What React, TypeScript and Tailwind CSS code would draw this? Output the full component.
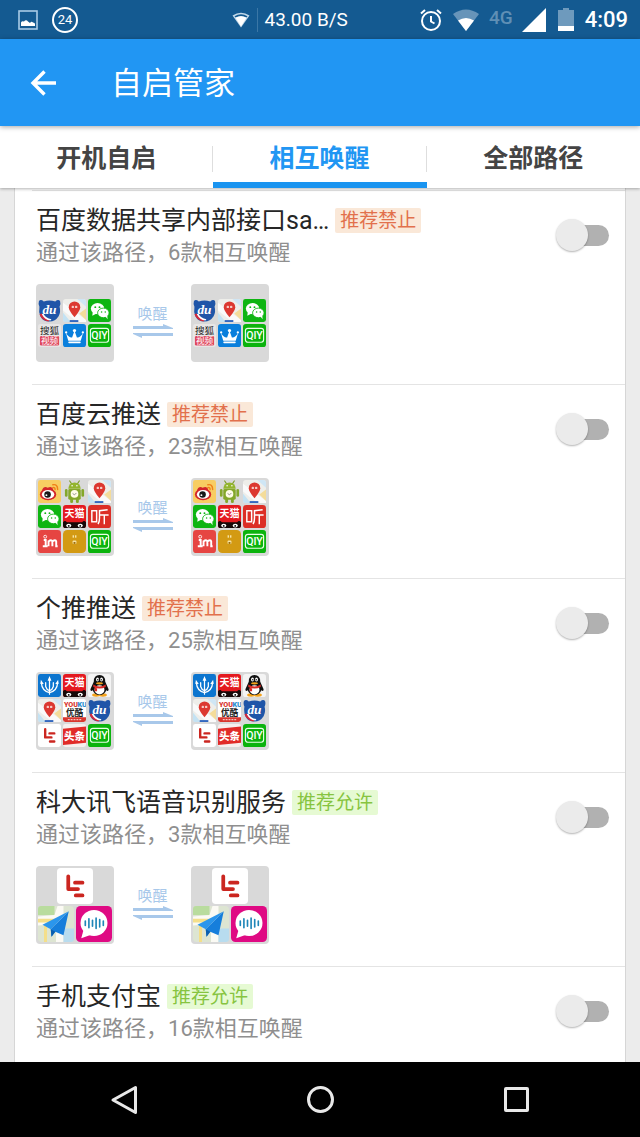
import type { ReactNode } from "react";

type AppName =
  | "baidu"
  | "map"
  | "wechat"
  | "sohu"
  | "crown"
  | "iqiyi"
  | "weibo"
  | "android"
  | "tmall"
  | "ting"
  | "inapp"
  | "lock"
  | "trident"
  | "qq"
  | "youku"
  | "letv"
  | "toutiao"
  | "plane"
  | "voice";

const art: Record<AppName, ReactNode> = {
  baidu: (
    <>
      <path d="M1 2Q3 0 6 2.500Q12 0.500 18 2.500Q21 0 23 2Q24 5 22.500 8Q24 13 21.500 18Q18 23.500 12 23.500Q5 23.500 2.500 18Q0.500 13 1.500 8Q0 5 1 2Z" fill="#1f55a8" />
      <path d="M1.500 16Q4 22.500 11 23.500L12 22Q6 20 4 15Z" fill="#d6293a" />
      <path d="M4 16Q7 22 13 22.500L14 21Q8 20 5.500 15Z" fill="#fff" />
      <text x="12" y="16" textAnchor="middle" fontSize="14" fontWeight="700" fontStyle="italic" fontFamily="Liberation Serif, serif" fill="#fff">du</text>
    </>
  ),
  map: (
    <>
      <rect width="24" height="24" rx="3" fill="#eeeeea" />
      <path d="M0 4L24 22V24H15L0 12Z" fill="#fafafa" />
      <path d="M17 15L24 10V22Z" fill="#f4dc9a" />
      <path d="M0 14L8 24H3Q0 24 0 21Z" fill="#c4e2f3" />
      <path d="M15 0H21Q24 0 24 3V8Z" fill="#cfe6f5" />
      <path d="M12 19Q6 12 6 8.500A6 6 0 0 1 18 8.500Q18 12 12 19Z" fill="#dc3830" />
      <rect x="9" y="7" width="2.500" height="2.500" rx="1" fill="#f6c9c4" />
      <rect x="12.500" y="7" width="2.500" height="2.500" rx="1" fill="#f6c9c4" />
      <rect x="7" y="22" width="9" height="2" fill="#3368bf" />
    </>
  ),
  wechat: (
    <>
      <rect width="24" height="24" rx="2.500" fill="#0eb512" />
      <ellipse cx="10" cy="10" rx="7" ry="5.800" fill="#fff" />
      <path d="M5 13L4.500 17.500L9 15Z" fill="#fff" />
      <ellipse cx="16" cy="14.500" rx="6" ry="5" fill="#fff" stroke="#0eb512" strokeWidth="0.900" />
      <path d="M18 18L20.500 21L20 17Z" fill="#fff" />
      <g fill="#0eb512">
        <circle cx="7.600" cy="8.500" r="1" />
        <circle cx="12" cy="8.500" r="1" />
        <circle cx="14.200" cy="13.500" r="0.800" />
        <circle cx="18" cy="13.500" r="0.800" />
      </g>
    </>
  ),
  sohu: (
    <>
      <rect width="24" height="24" rx="2.500" fill="#e8e6e6" />
      <text x="12" y="10.500" textAnchor="middle" fontSize="10" fontWeight="400" fill="#222">搜狐</text>
      <rect x="2" y="12.500" width="20" height="10" rx="1.500" fill="#e0485e" />
      <text x="12" y="21" textAnchor="middle" fontSize="9" fontWeight="400" fill="#fff">视频</text>
    </>
  ),
  crown: (
    <>
      <rect width="24" height="24" rx="3" fill="#0a7fdc" />
      <path d="M3 9Q6 14.500 9.500 14L12 7L14.500 14Q18 14.500 21 9L18.500 17.500H5.500Z" fill="#fff" />
      <circle cx="12" cy="6.800" r="1.700" fill="#fff" />
      <circle cx="3.300" cy="8.800" r="1.200" fill="#fff" />
      <circle cx="20.700" cy="8.800" r="1.200" fill="#fff" />
      <rect x="5.500" y="18.200" width="13" height="1.800" rx="0.900" fill="#fff" />
    </>
  ),
  iqiyi: (
    <>
      <rect width="24" height="24" rx="3" fill="#0bb30d" />
      <rect x="2.500" y="4.500" width="19" height="14.500" rx="2.500" fill="none" stroke="#e9ffe6" strokeWidth="1.200" />
      <text x="12" y="15.900" textAnchor="middle" fontSize="11" fontWeight="500" fill="#fff">QIY</text>
    </>
  ),
  weibo: (
    <>
      <rect width="24" height="24" rx="2.500" fill="#f8cd62" />
      <ellipse cx="10.500" cy="15" rx="8.500" ry="6" fill="#d3252a" />
      <path d="M4 11Q6 6 10 8Q15 6 16 10L14 12H5Z" fill="#d3252a" />
      <ellipse cx="10.500" cy="15" rx="6.500" ry="4.600" fill="#fff" />
      <circle cx="10" cy="15.200" r="3.400" fill="#181818" />
      <circle cx="8.800" cy="15.800" r="1" fill="#fff" />
      <path d="M15.500 5Q20.500 4 20.500 10M15.500 8Q18 7.500 17.800 10" fill="none" stroke="#f08018" strokeWidth="1.500" strokeLinecap="round" />
    </>
  ),
  android: (
    <>
      <path d="M7 1L9 4M17 1L15 4" stroke="#7e9d29" strokeWidth="1.200" strokeLinecap="round" />
      <path d="M5.500 9A6.500 6.500 0 0 1 18.500 9Z" fill="#93b52e" />
      <rect x="5.500" y="9.500" width="13" height="11" rx="1.500" fill="#84a72a" />
      <rect x="2" y="9.500" width="2.800" height="8" rx="1.400" fill="#84a72a" />
      <rect x="19.200" y="9.500" width="2.800" height="8" rx="1.400" fill="#84a72a" />
      <rect x="7.500" y="19" width="3" height="5" rx="1.400" fill="#84a72a" />
      <rect x="13.500" y="19" width="3" height="5" rx="1.400" fill="#84a72a" />
      <circle cx="9.500" cy="6" r="0.800" fill="#fff" />
      <circle cx="14.500" cy="6" r="0.800" fill="#fff" />
      <circle cx="12" cy="14.500" r="4" fill="#fffde8" />
      <path d="M10 14L12 15.500L14 13.500" fill="none" stroke="#777" strokeWidth="0.800" />
    </>
  ),
  tmall: (
    <>
      <rect width="24" height="24" rx="3" fill="#e4191f" />
      <text x="12" y="13" textAnchor="middle" fontSize="10.500" fontWeight="700" fill="#fff">天猫</text>
      <path d="M0 18Q2 15.500 4 18H20Q22 15.500 24 18V21Q24 24 21 24H3Q0 24 0 21Z" fill="#150808" />
      <ellipse cx="6" cy="21.500" rx="2.600" ry="2" fill="#fff" />
      <ellipse cx="18" cy="21.500" rx="2.600" ry="2" fill="#fff" />
      <circle cx="6" cy="21.800" r="1" />
      <circle cx="18" cy="21.800" r="1" />
    </>
  ),
  ting: (
    <>
      <rect width="24" height="24" rx="3.500" fill="#dc2e26" />
      <g fill="none" stroke="#fff" strokeWidth="1.500">
        <rect x="4" y="6" width="5" height="11.500" />
        <path d="M20.500 5L12 6V13.500Q12 17.500 10.500 20M12 10.500H21.500M17 10.500V20" />
      </g>
    </>
  ),
  inapp: (
    <>
      <rect width="24" height="24" rx="3.500" fill="#e64542" />
      <path d="M6 10.500H8V17M5 17H10M11 17V11M11 12Q14 9.500 15 12V17M15 12Q18.500 9.500 19 12V17H20.500" fill="none" stroke="#fff" strokeWidth="2" />
      <circle cx="7.500" cy="7" r="1.500" fill="none" stroke="#fff" strokeWidth="0.900" />
    </>
  ),
  lock: (
    <>
      <rect width="24" height="24" rx="4.500" fill="#d39a13" />
      <rect x="10" y="5.500" width="1.500" height="2.500" fill="#f7e3a4" />
      <rect x="12.500" y="5.500" width="1.500" height="2.500" fill="#f7e3a4" />
      <rect x="10" y="11" width="4" height="3.500" rx="1" fill="#f7e3a4" />
      <rect x="11" y="12.500" width="2" height="2" fill="#9c6c08" />
    </>
  ),
  trident: (
    <>
      <rect width="24" height="24" rx="2.500" fill="#0c75cf" />
      <path d="M3.500 9Q4 17.500 12 19.500Q20 17.500 20.500 9M8 9V13Q9 16.500 12 17.500Q15 16.500 16 13V9M12 5V21" fill="none" stroke="#fff" strokeWidth="1.300" strokeLinecap="round" />
      <path d="M12 2L14 7H10ZM3 6L6 10.500H2.500ZM21 6L18 10.500H21.500Z" fill="#fff" />
    </>
  ),
  qq: (
    <>
      <rect width="24" height="24" rx="3" fill="#f4f4f4" />
      <ellipse cx="8.500" cy="22" rx="4.200" ry="1.800" fill="#f3a21b" />
      <ellipse cx="15.500" cy="22" rx="4.200" ry="1.800" fill="#f3a21b" />
      <path d="M12 1Q18 1 18 8L21.500 16Q21.500 19 19 17Q17.500 22 12 22Q6.500 22 5 17Q2.500 19 2.500 16L6 8Q6 1 12 1Z" fill="#111" />
      <ellipse cx="12" cy="16.500" rx="5.200" ry="4.800" fill="#fff" />
      <path d="M5.500 11Q12 15 18.500 11V13.500Q12 17 5.500 13.500Z" fill="#d92b26" />
      <path d="M7 14L9.500 15V18H7Z" fill="#d92b26" />
      <ellipse cx="9.900" cy="5.800" rx="1.500" ry="2.100" fill="#fff" />
      <ellipse cx="14.100" cy="5.800" rx="1.500" ry="2.100" fill="#fff" />
      <circle cx="10.200" cy="6" r="0.700" />
      <circle cx="13.800" cy="6" r="0.700" />
      <ellipse cx="12" cy="9.700" rx="3.600" ry="1.200" fill="#f3a21b" />
    </>
  ),
  youku: (
    <>
      <rect width="24" height="24" rx="2.500" fill="#fff" />
      <text x="1" y="8.500" fontSize="7.500" fontWeight="900" fill="#d9362e">YOU</text>
      <text x="15" y="8.500" fontSize="7.500" fontWeight="900" fill="#2b90cf">KU</text>
      <text x="12" y="17.500" textAnchor="middle" fontSize="9" fontWeight="700" fill="#222">优酷</text>
      <path d="M0 19H24V21.500Q24 24 21.500 24H2.500Q0 24 0 21.500Z" fill="#d9362e" />
      <path d="M5 21.500H19" stroke="#f6c2bd" strokeWidth="1.200" strokeDasharray="2 1" />
    </>
  ),
  letv: (
    <>
      <rect width="24" height="24" rx="2.500" fill="#fff" />
      <path d="M7.500 5.500V14H14M12 9.800H17M12.500 18.300H17" fill="none" stroke="#cb2620" strokeWidth="2.500" strokeLinecap="round" strokeLinejoin="round" />
    </>
  ),
  toutiao: (
    <>
      <rect width="24" height="24" rx="2.500" fill="#f7efee" />
      <path d="M0 5L24 2.500V19.500L0 22Z" fill="#e12b28" />
      <text x="12" y="16.500" textAnchor="middle" fontSize="11" fontWeight="900" fill="#fff">头条</text>
    </>
  ),
  plane: (
    <>
      <rect width="24" height="24" rx="2.500" fill="#dde5d2" />
      <path d="M2 0H11V6H0V2Q0 0 2 0Z" fill="#b9dc9e" />
      <path d="M0 7L11 6L13 0H17V24H12V12L0 13Z" fill="#fbfaf4" />
      <path d="M0 8.500H12V11H0ZM4 12H6V24H4Z" fill="#f4df8a" />
      <path d="M17 15H24V22Q24 24 22 24H17Z" fill="#b8dcef" />
      <path d="M20.500 3.500L3 12.500L8.500 15.500Z" fill="#2b96ec" />
      <path d="M20.500 3.500L8.500 15.500L9 20.500L11.500 17.200L17 19.500Z" fill="#167edb" />
      <path d="M8.500 15.500L9 20.500L11.500 17.200Z" fill="#0b5fae" />
    </>
  ),
  voice: (
    <>
      <rect width="24" height="24" rx="3" fill="#df0a83" />
      <ellipse cx="12" cy="11.300" rx="9" ry="8.700" fill="#fff" />
      <path d="M5 16L3.500 21.500L10.500 19Z" fill="#fff" />
      <path d="M6.200 10V13M8.600 8.500V14.500M11 9.500V13.500M13.400 8V15M15.800 9V14M18.200 10V13" stroke="#1f86b8" strokeWidth="1.100" strokeLinecap="round" />
    </>
  ),
};

function AppTile({ rows, large }: { rows: AppName[][]; large?: boolean }) {
  return (
    <div className="flex size-[78px] flex-col items-center justify-center gap-[2px] rounded-[4px] bg-[#d9d9d9] pb-px pr-px">
      {rows.map((row, r) => (
        <div key={r} className="flex gap-[2px]">
          {row.map((name) => (
            <svg key={name} viewBox="0 0 24 24" className={large ? "size-9" : "size-[23px]"} aria-hidden="true">
              {art[name]}
            </svg>
          ))}
        </div>
      ))}
    </div>
  );
}

type Item = {
  title: string;
  count: number;
  allow?: boolean;
  large?: boolean;
  rows?: AppName[][];
};

const items: Item[] = [
  {
    title: "百度数据共享内部接口sa…",
    count: 6,
    rows: [
      ["baidu", "map", "wechat"],
      ["sohu", "crown", "iqiyi"],
    ],
  },
  {
    title: "百度云推送",
    count: 23,
    rows: [
      ["weibo", "android", "map"],
      ["wechat", "tmall", "ting"],
      ["inapp", "lock", "iqiyi"],
    ],
  },
  {
    title: "个推推送",
    count: 25,
    rows: [
      ["trident", "tmall", "qq"],
      ["map", "youku", "baidu"],
      ["letv", "toutiao", "iqiyi"],
    ],
  },
  {
    title: "科大讯飞语音识别服务",
    count: 3,
    allow: true,
    large: true,
    rows: [["letv"], ["plane", "voice"]],
  },
  { title: "手机支付宝", count: 16, allow: true },
];

function PathItem({ item }: { item: Item }) {
  return (
    <li className="ml-[17px] border-t border-[#e4e4e4] pl-1 pt-[13px]">
      <div className="flex items-start justify-between pr-4">
        <div>
          <div className="flex h-[33px] items-center gap-[6px]">
            <h2 className="text-[25px] leading-[33px] text-[#262626]">{item.title}</h2>
            <span
              className={
                item.allow
                  ? "rounded-[2px] bg-[#e6fad3] px-[5px] text-[19px] leading-[25px] text-[#86c440]"
                  : "rounded-[2px] bg-[#fae8d8] px-[5px] text-[19px] leading-[25px] text-[#e2704c]"
              }
            >
              {item.allow ? "推荐允许" : "推荐禁止"}
            </span>
          </div>
          <p className="text-[22px] leading-8 text-[#8f8f8f]">通过该路径，{item.count}款相互唤醒</p>
        </div>
        <input
          type="checkbox"
          role="switch"
          aria-label={item.title}
          className="mt-[14px] grid h-[34px] w-[53px] cursor-pointer appearance-none items-center before:col-start-1 before:row-start-1 before:ml-3 before:h-[21px] before:rounded-full before:bg-[#b1b1b1] after:col-start-1 after:row-start-1 after:size-8 after:rounded-full after:bg-[#ebebeb] after:shadow-[0_1px_2px_rgba(0,0,0,0.3)] checked:before:bg-[#90caf9] checked:after:justify-self-end checked:after:bg-[#2196f3]"
        />
      </div>
      {item.rows && (
        <div className="flex items-start pb-[22px] pt-[15px]">
          <AppTile rows={item.rows} large={item.large} />
          <div className="flex w-[77px] flex-col items-center pt-5 text-[#a8c8ea]">
            <span className="text-[15px] leading-5">唤醒</span>
            <svg viewBox="0 0 40 14" className="h-[14px] w-10" fill="currentColor" aria-hidden="true">
              <path d="M0 2H30V0L40 4V5H0Z" />
              <path d="M0 9H40V12H9V14L0 10Z" />
            </svg>
          </div>
          <AppTile rows={item.rows} large={item.large} />
        </div>
      )}
    </li>
  );
}

function StatusBar() {
  return (
    <div className="flex h-[39px] shrink-0 items-center bg-[#145a91] pl-[18px] pr-3 text-white">
      <div className="flex w-[35%] items-center gap-[14px]">
        <svg viewBox="0 0 20 20" className="size-5" aria-hidden="true">
          <rect x="1" y="1" width="18" height="18" fill="none" stroke="#a9cbe6" strokeWidth="1.600" />
          <path d="M3 16V12.500Q4 10.500 6 11.500Q8 9 10 11.500L12 13Q13.500 11 15 12.500Q17 12.500 17 14V16Z" fill="#fff" />
        </svg>
        <span className="flex size-[26px] items-center justify-center rounded-full border-2 border-white text-[13px] leading-none">
          24
        </span>
      </div>
      <div className="flex items-center gap-[7px]">
        <svg viewBox="0 0 18 16" className="h-4 w-[18px]" aria-hidden="true">
          <path d="M0.500 3.500Q9 -2 17.500 3.500L9 15.500Z" fill="#c3d9ea" />
          <path d="M2.500 4.200Q9 0.500 15.500 4.200L14.500 5.500Q9 2.500 3.500 5.500Z" fill="#145a91" />
          <path d="M3.500 5.800Q9 2.800 14.500 5.800L9 14.500Z" fill="#fff" />
        </svg>
        <span className="h-6 w-px bg-[#3b77a6]" />
        <span className="text-[19px] leading-6">43.00 B/S</span>
      </div>
      <div className="ml-auto flex items-center">
        <svg viewBox="0 0 24 24" className="size-6" fill="none" stroke="#fff" strokeWidth="2" aria-hidden="true">
          <circle cx="12" cy="13" r="9" />
          <path d="M12 8V13.500L15.500 15.500M2 5.500L6 2M22 5.500L18 2" />
        </svg>
        <svg viewBox="0 0 28 22" className="ml-[9px] h-[22px] w-7" aria-hidden="true">
          <path d="M1 5Q14 -4 27 5L14 22Z" fill="#6794b9" />
          <path d="M6 11.500Q14 6.500 22 11.500L14 22Z" fill="#fff" />
        </svg>
        <span className="ml-[9px] self-start pt-[-2px] text-[19px] font-medium leading-none text-[#5f8fb5]">4G</span>
        <svg viewBox="0 0 24 24" className="ml-[9px] size-6" fill="#fff" aria-hidden="true">
          <path d="M24 0V24H0Z" />
        </svg>
        <svg viewBox="0 0 16 23" className="ml-3 h-[23px] w-4" aria-hidden="true">
          <path d="M5 0H11V2H16V18H0V2H5Z" fill="#6e9abd" />
          <path d="M0 18H16V23H0Z" fill="#fff" />
        </svg>
        <span className="ml-[11px] text-[22px] font-medium leading-6">4:09</span>
      </div>
    </div>
  );
}

const tabs = ["开机自启", "相互唤醒", "全部路径"];

export default function App() {
  return (
    <div className="flex h-screen flex-col bg-[#ececec] font-['Roboto','Noto_Sans_CJK_SC',sans-serif]">
      <StatusBar />
      <header className="relative z-20 flex h-[87px] shrink-0 items-center bg-[#2196f3] pl-[30px] text-white shadow-[0_1px_5px_rgba(0,0,0,0.35)]">
        <button type="button" aria-label="返回">
          <svg viewBox="0 0 28 26" className="h-[26px] w-7" fill="none" stroke="currentColor" strokeWidth="3.400" aria-hidden="true">
            <path d="M26 13H3M14.500 1.500L3 13L14.500 24.500" />
          </svg>
        </button>
        <h1 className="ml-[53px] pt-[2px] text-[31px] leading-10">自启管家</h1>
      </header>
      <div className="relative z-10 grid h-[62px] shrink-0 grid-cols-3 bg-white shadow-[0_1px_3px_rgba(0,0,0,0.3)]" role="tablist">
        {tabs.map((tab, i) => (
          <button
            key={tab}
            type="button"
            role="tab"
            aria-selected={i === 1}
            className={
              i === 1
                ? "flex flex-col border-b-[6px] border-[#1a94f0] pt-5 text-[25px] font-bold text-[#2196f3]"
                : "flex flex-col pt-5 text-[25px] font-bold text-[#444444]"
            }
          >
            <span className={i < 2 ? "h-[26px] w-full border-r border-[#dedede] leading-[26px]" : "h-[26px] w-full leading-[26px]"}>
              {tab}
            </span>
          </button>
        ))}
      </div>
      <main className="min-h-0 flex-1 overflow-hidden px-[14px]">
        <ul className="min-h-full border-x border-[#d6d6d6] bg-white pt-[2px]">
          {items.map((item) => (
            <PathItem key={item.title} item={item} />
          ))}
        </ul>
      </main>
      <nav className="grid h-[75px] shrink-0 grid-cols-3 bg-black px-[26px] text-[#e8e8e8]">
        <button type="button" aria-label="后退" className="flex items-center justify-center">
          <svg viewBox="0 0 28 30" className="h-[30px] w-7" fill="none" stroke="currentColor" strokeWidth="3" strokeLinejoin="round" aria-hidden="true">
            <path d="M25.500 2.500V27.500L3 15Z" />
          </svg>
        </button>
        <button type="button" aria-label="主页" className="flex items-center justify-center">
          <span className="size-[27px] rounded-full border-[3px] border-current" />
        </button>
        <button type="button" aria-label="最近任务" className="flex items-center justify-center">
          <span className="size-[25px] rounded-[2px] border-[3px] border-current" />
        </button>
      </nav>
    </div>
  );
}
